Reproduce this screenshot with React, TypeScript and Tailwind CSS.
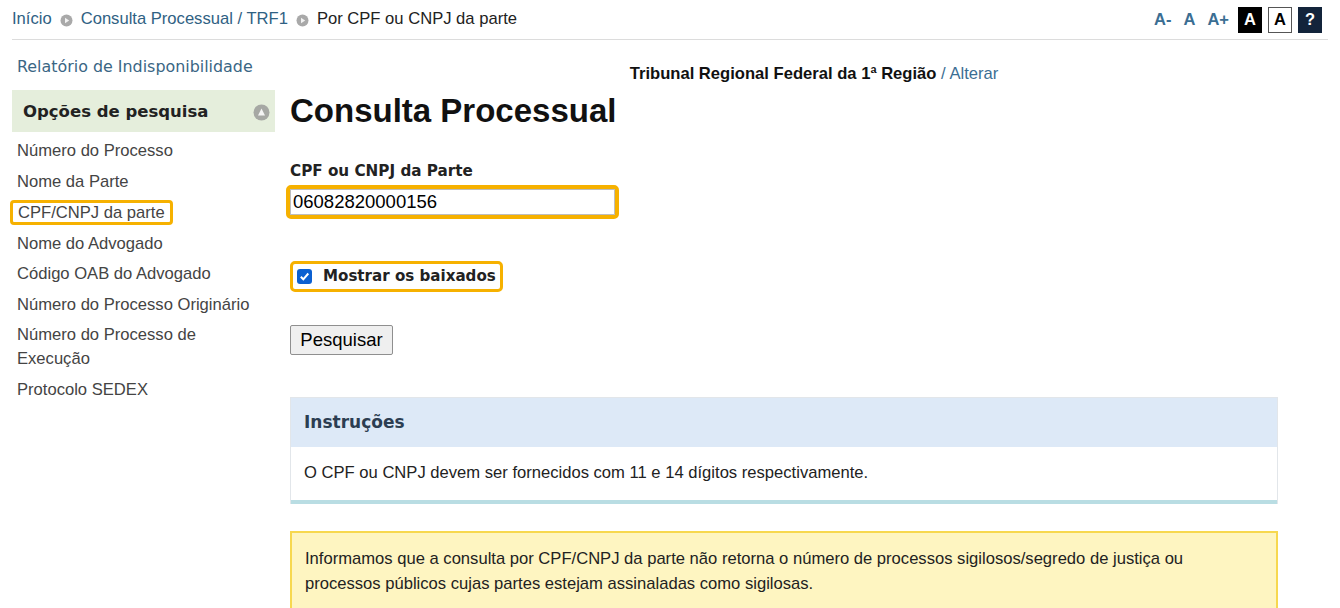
import React from 'react';

const Bullet: React.FC = () => (
  <svg width="13" height="13" viewBox="0 0 13 13" className="mx-[8px] mt-[3px]">
    <circle cx="6.5" cy="6.5" r="6" fill="#a9a9a9" />
    <path d="M5 3.8 L9.2 6.5 L5 9.2 Z" fill="#f2f2f2" />
  </svg>
);

const menu = [
  'Número do Processo',
  'Nome da Parte',
  'CPF/CNPJ da parte',
  'Nome do Advogado',
  'Código OAB do Advogado',
  'Número do Processo Originário',
  'Número do Processo de Execução',
  'Protocolo SEDEX',
];

export default function App() {
  return (
    <div className="w-[1340px] h-[608px] overflow-hidden bg-white font-['Liberation_Sans',Arial,sans-serif] text-[#222]">
      {/* top bar */}
      <div className="mx-3 h-10 flex items-center justify-between border-b border-[#dcdcdc]">
        <div className="flex items-center text-[16.6px]">
          <a className="text-[#2f6183]">Início</a>
          <Bullet />
          <a className="text-[#2f6183]">Consulta Processual / TRF1</a>
          <Bullet />
          <span className="text-[#222]">Por CPF ou CNPJ da parte</span>
        </div>
        <div className="flex items-center mr-[6px] font-bold text-[16.5px]">
          <span className="text-[#3b6e93]">A-</span>
          <span className="text-[#3b6e93] ml-[12px]">A</span>
          <span className="text-[#3b6e93] ml-[12px]">A+</span>
          <span className="w-6 h-[26px] bg-black text-white flex items-center justify-center ml-[9px]">A</span>
          <span className="w-6 h-[26px] bg-white text-black border border-[#555] flex items-center justify-center ml-[6px]">A</span>
          <span className="w-6 h-[26px] bg-[#13243b] text-white flex items-center justify-center ml-[6px]">?</span>
        </div>
      </div>

      <div className="flex">
        {/* sidebar */}
        <aside className="w-[263px] ml-3 shrink-0">
          <div className="pt-[15px] pl-[5px] h-[50px] font-['DejaVu_Sans',Verdana,sans-serif] text-[15.9px] text-[#3a6684]">
            Relatório de Indisponibilidade
          </div>
          <div className="h-[42px] bg-[#e5eedc] flex items-center justify-between pl-[11px] pr-[5px] pt-[2px]">
            <span className="font-['DejaVu_Sans',Verdana,sans-serif] font-bold text-[16.5px] text-[#222]">Opções de pesquisa</span>
            <svg width="17" height="17" viewBox="0 0 17 17">
              <circle cx="8.5" cy="8.5" r="8" fill="#a6a8a4" />
              <path d="M8.5 4.5 L12 11.5 L5 11.5 Z" fill="#f4f4f4" />
            </svg>
          </div>
          <ul className="pt-[4px] text-[16.6px] text-[#444] leading-[24px]">
            {menu.map((m) => (
              <li key={m} className="pt-[3px] pb-[3.5px] pl-[5px] pr-[8px]">
                {m === 'CPF/CNPJ da parte' ? (
                  <span className="inline-block -ml-[7px] px-[5px] border-[3px] border-[#f6b100] rounded-[4px] leading-[19px]">{m}</span>
                ) : (
                  m
                )}
              </li>
            ))}
          </ul>
        </aside>

        {/* main */}
        <main className="ml-[15px] w-[988px]">
          <div className="pt-[22px] text-center pl-[60px] text-[16.6px]">
            <span className="font-bold text-[#111]">Tribunal Regional Federal da 1ª Região</span>
            <span className="text-[#3b6e93]"> / Alterar</span>
          </div>
          <h1 className="mt-[4px] font-bold text-[33px] leading-[40px] text-[#111]">Consulta Processual</h1>

          <div className="mt-[29px] font-['DejaVu_Sans',Verdana,sans-serif] font-bold text-[15.2px] text-[#222]">CPF ou CNPJ da Parte</div>
          <div className="mt-[2px] -ml-[4px] w-[333px] h-[34px] border-[4px] border-[#f6b100] rounded-[5px]">
            <div className="h-full border border-[#bdbdbd] bg-white pl-[2px] text-[18.5px] leading-[24px] text-black">06082820000156</div>
          </div>

          <div className="mt-[42px] inline-flex items-center h-[31px] pl-[4px] pr-[4px] border-[3px] border-[#f6b100] rounded-[5px]">
            <span className="w-[15px] h-[15px] rounded-[3px] bg-[#0b60d1] flex items-center justify-center">
              <svg width="11" height="11" viewBox="0 0 11 11">
                <path d="M1.8 5.8 L4.3 8.3 L9.3 2.5" stroke="white" strokeWidth="2" fill="none" />
              </svg>
            </span>
            <span className="ml-[11px] font-['DejaVu_Sans',Verdana,sans-serif] font-bold text-[15.1px] text-[#222]">Mostrar os baixados</span>
          </div>

          <div className="mt-[33px]">
            <button className="h-[30px] w-[103px] bg-[#efefef] border border-[#8f8f8f] rounded-[2px] text-[18.5px] text-black">Pesquisar</button>
          </div>

          <div className="mt-[42px] border border-[#e2e6ea] border-b-0">
            <div className="h-[49px] bg-[#dde9f7] flex items-center pl-[13px] pt-[2px] font-['DejaVu_Sans',Verdana,sans-serif] font-bold text-[17px] text-[#2c3e52]">Instruções</div>
            <div className="h-[53px] flex items-center pl-[13px] text-[16.6px] text-[#222]">O CPF ou CNPJ devem ser fornecidos com 11 e 14 dígitos respectivamente.</div>
            <div className="h-[4px] bg-[#b9dde3]" />
          </div>

          <div className="mt-[27px] border-2 border-[#f7d84f] bg-[#fef5c1] px-[13px] pt-[13px] pb-[14px] text-[16.6px] leading-[25px] text-[#222]">
            Informamos que a consulta por CPF/CNPJ da parte não retorna o número de processos sigilosos/segredo de justiça ou
            <br />
            processos públicos cujas partes estejam assinaladas como sigilosas.
          </div>
        </main>
      </div>
    </div>
  );
}
